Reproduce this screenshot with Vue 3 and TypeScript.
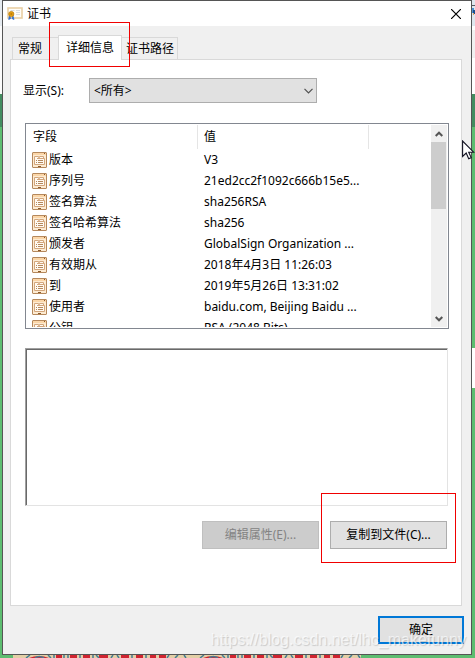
<script setup lang="ts">
import { ref } from 'vue'

interface Field {
  name: string
  value: string
}

const tabs: string[] = ['常规', '详细信息', '证书路径']
const activeTab = ref(1)
const filter = ref('<所有>')
const detail = ref('')

const fields: Field[] = [
  { name: '版本', value: 'V3' },
  { name: '序列号', value: '21ed2cc2f1092c666b15e5...' },
  { name: '签名算法', value: 'sha256RSA' },
  { name: '签名哈希算法', value: 'sha256' },
  { name: '颁发者', value: 'GlobalSign Organization ...' },
  { name: '有效期从', value: '2018年4月3日 11:26:03' },
  { name: '到', value: '2019年5月26日 13:31:02' },
  { name: '使用者', value: 'baidu.com, Beijing Baidu ...' },
  { name: '公钥', value: 'RSA (2048 Bits)' },
]
</script>

<template>
  <div class="desktop">
    <div class="edge" aria-hidden="true">
      <svg width="3" height="20" viewBox="0 0 3 20">
        <path d="M0 5.500h3" stroke="#555b62" />
        <path d="M0 8h2v5h-2z" fill="#4b8fd0" />
        <path d="M1 10h2v4h-2z" fill="#1c4f8c" />
        <path d="M1 13h1v2h-1z" fill="#e0a058" />
      </svg>
    </div>

    <section class="window" aria-label="证书">
      <header class="titlebar">
        <svg class="cert" width="16" height="13" viewBox="0 0 16 13" aria-hidden="true">
          <rect x="1" y="1" width="14" height="10" fill="#fffdf8" stroke="#e9cfa4" stroke-width="1.600" />
          <path d="M3.500 3.500h4M9 3.500h4M9 5.500h4M9 7.500h4" stroke="#d9dde2" />
          <path d="M2.500 8.500l-.8 4 2-1zM5.800 8.500l1.200 4-2-1z" fill="#2f6fd0" stroke="#2f6fd0" stroke-width=".8" />
          <circle cx="4.300" cy="7" r="2.600" fill="#e2a013" stroke="#b87708" stroke-width=".7" />
          <circle cx="4.300" cy="7" r="1" fill="#c27d05" />
        </svg>
        <h1>证书</h1>
        <button class="close" type="button" aria-label="关闭">
          <svg width="10" height="10" viewBox="0 0 10 10"><path d="M0 0L10 10M10 0L0 10" stroke="#000" stroke-width="1.200" /></svg>
        </button>
      </header>

      <div class="body">
        <div class="tabs" role="tablist">
          <button
            v-for="(tab, i) in tabs"
            :key="tab"
            class="tab"
            :class="{ active: i === activeTab }"
            type="button"
            role="tab"
            :aria-selected="i === activeTab"
            @click="activeTab = i"
          >
            {{ tab }}<span v-if="i === 1" class="mark mark-tab"></span>
          </button>
        </div>

        <div class="panel" role="tabpanel">
          <div class="filter">
            <label for="filter">显示(S):</label>
            <div class="combo">
              <select id="filter" v-model="filter">
                <option>&lt;所有&gt;</option>
              </select>
              <svg width="9" height="6" viewBox="0 0 9 6" aria-hidden="true"><path d="M.5 .8l4 4 4-4" fill="none" stroke="#505050" stroke-width="1.200" /></svg>
            </div>
          </div>

          <div class="list">
            <div class="view">
              <table>
                <colgroup><col class="c-name" /><col class="c-value" /><col /></colgroup>
                <thead>
                  <tr><th>字段</th><th>值</th><th></th></tr>
                </thead>
                <tbody>
                  <tr v-for="f in fields" :key="f.name">
                    <td>
                      <div class="name">
                        <svg width="15" height="16" viewBox="0 0 15 16" aria-hidden="true">
                          <rect x=".5" y=".5" width="14" height="15" rx=".5" fill="#fdebd2" stroke="#b5885c" />
                          <path d="M1 1h13v2h-13z" fill="#fbd6a8" />
                          <path d="M12 1h1v1h-1z" fill="#8b5a2b" />
                          <path d="M2.500 12.500v-8h4v1h1v-1h4v2h1v6z" fill="#fffaf2" stroke="#d3a67c" />
                          <path d="M5 6.500h7" stroke="#d3a67c" />
                          <path d="M4 8.500h1M6 8.500h5M4 10.500h1M6 10.500h5" stroke="#b5885c" />
                          <path d="M6 14h3v1h-3z" fill="#8b5a2b" />
                        </svg>
                        <span>{{ f.name }}</span>
                      </div>
                    </td>
                    <td>{{ f.value }}</td>
                    <td></td>
                  </tr>
                </tbody>
              </table>
            </div>
            <div class="scroll">
              <button type="button" aria-label="向上">
                <svg width="8" height="6" viewBox="0 0 8 6"><path d="M.7 5l3.300-3.300 3.300 3.300" fill="none" stroke="#555" stroke-width="2" /></svg>
              </button>
              <div class="thumb"></div>
              <button class="down" type="button" aria-label="向下">
                <svg width="8" height="6" viewBox="0 0 8 6"><path d="M.7 1l3.300 3.300 3.300-3.300" fill="none" stroke="#555" stroke-width="2" /></svg>
              </button>
            </div>
          </div>

          <textarea v-model="detail" class="detail" aria-label="详细信息" readonly></textarea>

          <div class="actions">
            <button class="btn" type="button" disabled>编辑属性(E)...</button>
            <button class="btn" type="button">复制到文件(C)...<span class="mark mark-copy"></span></button>
          </div>
        </div>

        <footer class="footer">
          <button class="btn ok" type="button">确定</button>
        </footer>
      </div>
    </section>

    <div class="strip" aria-hidden="true">
      <svg width="348" height="3" viewBox="0 0 348 3">
        <defs>
          <pattern id="letters" width="174" height="3" patternUnits="userSpaceOnUse">
            <rect width="174" height="3" fill="#e3cfa6" />
            <path d="M16 3q10-4 20 0zM43 0h6v3h-6zM57 0h7v3h-7zM70 0h7v3h-7zM86 0h9v3h-9zM108 0h8v3h-8zM123 0h7v3h-7zM137 0h6v3h-6zM146 0h7v3h-7z" fill="#cf2430" />
            <path d="M13 3l4-3M22 3q4-3 9 0M35 0l3 3M41 0v3M51 0v3M55 0v3M67 0v3M80 0v3M83 0l3 3M98 3l2-3M104 0l2 3M119 0v3M133 0v3M156 0l-2 3M162 3l3-3M171 0l2 3" fill="none" stroke="#447c93" stroke-width="1.500" />
          </pattern>
        </defs>
        <rect width="348" height="3" fill="url(#letters)" />
      </svg>
    </div>

    <div class="watermark">https://blog.csdn.net/lhc_makefunny</div>

    <svg class="cursor" width="13" height="20" viewBox="0 0 13 20" aria-hidden="true">
      <path d="M.6 1v15.400l3.600-3.400 2.500 5.700 2.500-1.100-2.500-5.400h4.900z" fill="#fff" stroke="#101020" stroke-width="1.100" />
    </svg>
  </div>
</template>

<style>
body {
  background: #5dbd70;
}
</style>

<style scoped>
* {
  box-sizing: border-box;
}
.desktop {
  position: relative;
  padding: 0 3px 3px 2px;
  overflow: hidden;
  font: 12px/16px "Noto Sans", "Noto Sans CJK SC", sans-serif;
  color: #000;
  background: linear-gradient(#e6ebf0 26px, #fbfbfb 26px 94px, #438c60 94px 127px, #5dbd70 127px);
}
button,
select,
textarea {
  margin: 0;
  font: inherit;
  color: inherit;
}
.edge {
  position: absolute;
  top: 0;
  right: 0;
  width: 3px;
  height: 388px;
  background: linear-gradient(#dfe7ee 26px, #fff 26px 30px, #f0f0f0 30px 58px, #fff 58px 94px, #438c60 94px 127px, #5dbd70 127px 348px, #fff 348px);
}
.edge svg {
  display: block;
}
.window {
  position: relative;
  border: 1px solid #555;
  background: #f0f0f0;
}
.titlebar {
  display: flex;
  align-items: center;
  height: 25px;
  padding: 0 10px 0 4px;
  background: #fff;
}
h1 {
  flex: 1;
  margin: 0 0 0 4px;
  font-size: 12px;
  line-height: 16px;
  font-weight: 400;
}
.close {
  display: flex;
  padding: 0;
  border: 0;
  background: none;
}
.body {
  padding: 9px 9px 10px 7px;
}
.tabs {
  display: flex;
  align-items: flex-end;
  height: 24px;
  padding-left: 2px;
}
.tab {
  position: relative;
  height: 22px;
  padding: 0 3px 0 5px;
  border: 1px solid #d9d9d9;
  border-bottom: 0;
  line-height: 20px;
  background: #f0f0f0;
}
.tab:first-child {
  padding-right: 16px;
  border-right: 0;
}
.tab:last-child {
  padding-left: 4px;
  border-left: 0;
}
.tab.active {
  z-index: 1;
  height: 25px;
  margin-bottom: -1px;
  padding: 0 7px;
  background: #fff;
}
.panel {
  padding: 18px 14px 56px;
  border: 1px solid #d9d9d9;
  background: #fff;
}
.filter {
  display: flex;
  align-items: center;
  margin-left: -2px;
}
.filter label {
  width: 66px;
}
.combo {
  position: relative;
  width: 228px;
}
.combo select {
  display: block;
  width: 100%;
  height: 25px;
  padding: 0 20px 0 4px;
  border: 1px solid #adadad;
  border-radius: 0;
  appearance: none;
  background: #e1e1e1;
}
.combo svg {
  position: absolute;
  top: 10px;
  right: 4px;
  pointer-events: none;
}
.list {
  display: flex;
  height: 206px;
  margin: 20px -2px 0 0;
  padding: 1px;
  border: 1px solid #828790;
}
.view {
  flex: 1;
  overflow: hidden;
}
table {
  width: 100%;
  table-layout: fixed;
  border-spacing: 0;
}
.c-name,
.c-value {
  width: 171px;
}
th {
  height: 24px;
  padding: 0 6px;
  border-right: 1px solid #e5e5e5;
  text-align: left;
  font-weight: 400;
}
th:last-child {
  border: 0;
}
td {
  height: 21px;
  padding: 0 0 0 6px;
  white-space: nowrap;
}
td:first-child {
  padding-left: 5px;
}
.name {
  display: flex;
  align-items: center;
  gap: 2px;
}
.scroll {
  display: flex;
  flex-direction: column;
  width: 16px;
  background: #f0f0f0;
}
.scroll button {
  display: flex;
  align-items: center;
  justify-content: center;
  height: 17px;
  padding: 0;
  border: 0;
  background: none;
}
.thumb {
  height: 67px;
  margin-right: 1px;
  background: #cdcdcd;
}
.scroll .down {
  margin-top: auto;
}
.detail {
  display: block;
  width: calc(100% + 1px);
  height: 158px;
  margin-top: 19px;
  padding: 2px;
  border: 1px solid #e3e3e3;
  border-top-color: #a0a0a0;
  border-left-color: #a0a0a0;
  box-shadow: inset 1px 1px #696969;
  border-radius: 0;
  outline: 0;
  resize: none;
  background: #fff;
}
.actions {
  display: flex;
  justify-content: flex-end;
  gap: 11px;
  margin-top: 15px;
}
.btn {
  position: relative;
  width: 117px;
  height: 28px;
  padding: 0;
  border: 1px solid #adadad;
  background: #e1e1e1;
}
.btn:disabled {
  border-color: #bfbfbf;
  color: #838383;
  background: #ccc;
}
.footer {
  display: flex;
  justify-content: flex-end;
  margin-top: 10px;
  margin-right: -2px;
}
.btn.ok {
  width: 86px;
  border: 2px solid #0078d7;
}
.mark {
  position: absolute;
  border: 1px solid #f00000;
  pointer-events: none;
}
.mark-tab {
  inset: -14px -9px -7px -10px;
}
.mark-copy {
  inset: -29px -10px -15px;
}
.strip {
  position: absolute;
  left: 13px;
  bottom: 0;
  height: 3px;
  overflow: hidden;
}
.strip svg {
  display: block;
}
.watermark {
  position: absolute;
  right: 9px;
  bottom: 8px;
  font: 16px/20px "Liberation Sans", sans-serif;
  color: rgba(255, 255, 255, 0.65);
  text-shadow: 1px 1px 1px rgba(0, 0, 0, 0.16);
  pointer-events: none;
}
.cursor {
  position: absolute;
  top: 140px;
  right: 0;
}
</style>
